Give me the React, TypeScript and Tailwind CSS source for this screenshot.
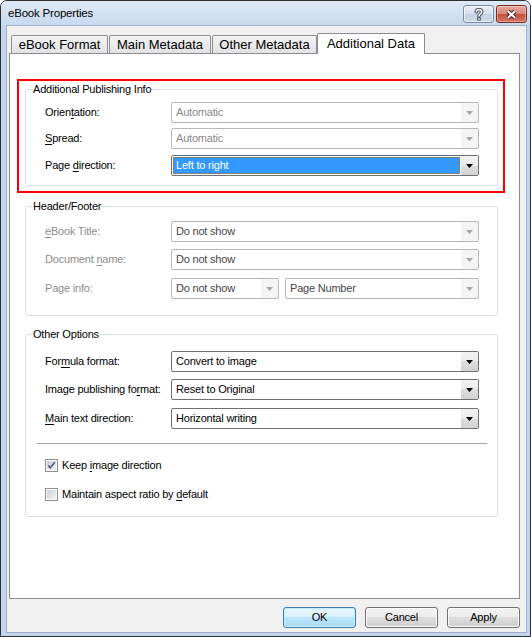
import type { ReactNode } from "react";

type ComboState = "disabled" | "enabled" | "focused";

function Key({ children }: { children: string }) {
    return <span className="underline decoration-1 underline-offset-[2px]">{children}</span>;
}

function DropArrow({ color }: { color: string }) {
    return (
        <svg width="7" height="4" viewBox="0 0 7 4">
            <path d="M0 0H7L3.5 4Z" fill={color} />
        </svg>
    );
}

function Combo({ value, state, width = "w-[308px]", tone = "text-black" }: { value: string; state: ComboState; width?: string; tone?: string }) {
    const disabled = state === "disabled";
    return (
        <div className={`flex h-[21px] shrink-0 rounded-[2px] border bg-white ${width} ${disabled ? "border-[#b4b8bb]" : "border-[#707070]"}`}>
            {state === "focused" ? (
                <div className="m-[1px] flex flex-1 items-center border border-dotted border-[#cc6600] bg-[#3399ff] pl-[2px] text-white">{value}</div>
            ) : (
                <div className={`flex flex-1 items-center pl-[4px] ${tone}`}>{value}</div>
            )}
            <div className={`flex w-[17px] items-center justify-center rounded-r-[1px] ${disabled ? "bg-[#f4f4f4]" : "bg-[linear-gradient(#f3f3f3,#ececec_50%,#dedede_50%,#d2d2d2)]"}`}>
                <DropArrow color={disabled ? "#a6a6a6" : "#000"} />
            </div>
        </div>
    );
}

function Row({ label, tone = "text-black", children }: { label: ReactNode; tone?: string; children: ReactNode }) {
    return (
        <div className="flex h-[21px] items-center">
            <div className={`w-[126px] shrink-0 whitespace-nowrap ${tone}`}>{label}</div>
            {children}
        </div>
    );
}

function Group({ title, className = "", children }: { title: string; className?: string; children: ReactNode }) {
    return (
        <fieldset className={`w-[473px] shrink-0 rounded-[3px] border border-[#d5dfe5] ${className}`}>
            <legend className="ml-[6px] px-[1px] leading-[15px] text-black">{title}</legend>
            {children}
        </fieldset>
    );
}

function Checkbox({ checked }: { checked: boolean }) {
    return (
        <svg width="13" height="13" viewBox="0 0 13 13" className="shrink-0">
            <defs>
                <linearGradient id={checked ? "cbOn" : "cbOff"} x1="0" y1="0" x2="1" y2="1">
                    <stop offset="0" stopColor="#c9ccd1" />
                    <stop offset="1" stopColor="#f5f5f5" />
                </linearGradient>
            </defs>
            <rect x="0.5" y="0.5" width="12" height="12" fill="#fdfdfd" stroke="#8e8f8f" />
            <rect x="2" y="2" width="9" height="9" fill={`url(#${checked ? "cbOn" : "cbOff"})`} />
            {checked && <path d="M3.2 6.4L5.3 8.8L9.8 3.2" fill="none" stroke="#4b5f8e" strokeWidth="1.7" />}
        </svg>
    );
}

function Tab({ label, width, active = false }: { label: string; width: string; active?: boolean }) {
    return active ? (
        <div className={`relative z-10 -mb-px flex h-[21px] justify-center rounded-t-[2px] border border-b-0 border-[#898c95] bg-white pt-[2px] ${width}`}>
            {label}
        </div>
    ) : (
        <div className={`flex h-[18px] items-center justify-center rounded-t-[2px] border border-b-0 border-[#8e8f8f] bg-linear-to-b from-[#f4f4f4] to-[#e2e2e2] ${width}`}>
            {label}
        </div>
    );
}

function Button({ label, primary = false }: { label: string; primary?: boolean }) {
    return (
        <button
            className={`flex h-[21px] w-[73px] items-center justify-center rounded-[3px] border text-black ${
                primary
                    ? "border-[#3c7fb1] bg-[linear-gradient(#eaf6fd,#d9f0fc_50%,#bee6fd_50%,#a7d9f5)] shadow-[inset_0_0_0_1px_#c4ecfc]"
                    : "border-[#707070] bg-[linear-gradient(#f2f2f2,#ebebeb_50%,#dddddd_50%,#cfcfcf)] shadow-[inset_0_0_0_1px_#fcfcfc]"
            }`}
        >
            {label}
        </button>
    );
}

export default function App() {
    return (
        <div className="h-[637px] w-[531px] overflow-hidden bg-white font-['Liberation_Sans',Arial,sans-serif] text-[11px] leading-[15px] tracking-[-0.2px] text-black">
            <div className="flex h-full w-full flex-col rounded-t-[7px] border border-[#2f2f2f] bg-[#c2d6ed]">
                {/* caption */}
                <div className="flex h-[24px] shrink-0 items-start rounded-t-[6px] bg-linear-to-b from-[#dfeaf7] to-[#c7d9ee]">
                    <span className="ml-[7px] mt-[5px] text-[11.5px]">eBook Properties</span>
                    <div className="ml-auto mr-[3px] mt-[4px] flex gap-[2px]">
                        <div className="flex h-[18px] w-[31px] items-center justify-center rounded-[3px] border border-[#7a8ba1] bg-[linear-gradient(#e8eef6,#d6e0ec_50%,#c4d2e3_50%,#ccd9e8)] shadow-[inset_0_0_0_1px_rgba(255,255,255,0.6)]">
                            <svg width="10" height="13" viewBox="0 0 10 13">
                                <path d="M2.3 4.1C2.3 2.4 3.5 1.6 5 1.6S7.7 2.4 7.7 3.9C7.7 5.9 5 5.8 5 8" fill="none" stroke="#3d4652" strokeWidth="3.4" strokeLinecap="round" />
                                <rect x="3.2" y="9.3" width="3.6" height="3.2" rx="0.6" fill="#3d4652" />
                                <path d="M2.3 4.1C2.3 2.4 3.5 1.6 5 1.6S7.7 2.4 7.7 3.9C7.7 5.9 5 5.8 5 8" fill="none" stroke="#fff" strokeWidth="1.5" strokeLinecap="round" />
                                <rect x="4.2" y="10.2" width="1.6" height="1.5" fill="#fff" />
                            </svg>
                        </div>
                        <div className="flex h-[18px] w-[31px] items-center justify-center rounded-[3px] border border-[#7a2c23] bg-[linear-gradient(#e9a99c,#d88676_50%,#c5503d_50%,#d37360)] shadow-[inset_0_0_0_1px_rgba(255,255,255,0.35)]">
                            <svg width="13" height="11" viewBox="0 0 13 11">
                                <path d="M3 2.2L10 8.8M10 2.2L3 8.8" stroke="#4d1b15" strokeWidth="4.2" />
                                <path d="M3 2.2L10 8.8M10 2.2L3 8.8" stroke="#fff" strokeWidth="2.2" />
                            </svg>
                        </div>
                    </div>
                </div>

                {/* client area */}
                <div className="mb-[3px] ml-[5px] mr-[3px] flex flex-1 flex-col border border-[#9fb0c6] bg-[#f0f0f0]">
                    <div className="flex h-[27px] shrink-0 items-end pl-[4px] text-[13px] tracking-normal">
                        <Tab label="eBook Format" width="w-[97px]" />
                        <div className="w-px" />
                        <Tab label="Main Metadata" width="w-[102px]" />
                        <div className="w-px" />
                        <Tab label="Other Metadata" width="w-[105px]" />
                        <Tab label="Additional Data" width="w-[108px]" active />
                    </div>

                    <div className="ml-[2px] flex h-[546px] w-[511px] shrink-0 flex-col border border-[#898c95] bg-white">
                        {/* highlighted section */}
                        <div className="ml-[7px] mt-[25px] h-[114px] w-[488px] shrink-0 border-2 border-[#ff0000] pl-[6px] pt-px">
                            <Group title="Additional Publishing Info">
                                <div className="flex flex-col pb-[9px] pl-[19px] pt-[5px]">
                                    <Row label={<>Orien<Key>t</Key>ation:</>}>
                                        <Combo value="Automatic" state="disabled" tone="text-[#8a8a8a]" />
                                    </Row>
                                    <div className="h-[5px]" />
                                    <Row label={<><Key>S</Key>pread:</>}>
                                        <Combo value="Automatic" state="disabled" tone="text-[#8a8a8a]" />
                                    </Row>
                                    <div className="h-[6px]" />
                                    <Row label={<>Page <Key>d</Key>irection:</>}>
                                        <Combo value="Left to right" state="focused" />
                                    </Row>
                                </div>
                            </Group>
                        </div>

                        <Group title="Header/Footer" className="ml-[15px] mt-[6px]">
                            <div className="flex flex-col pb-[16px] pl-[19px] pt-[7px]">
                                <Row label={<><Key>e</Key>Book Title:</>} tone="text-[#8d8d8d]">
                                    <Combo value="Do not show" state="disabled" tone="text-[#454545]" />
                                </Row>
                                <div className="h-[7px]" />
                                <Row label={<>Document <Key>n</Key>ame:</>} tone="text-[#8d8d8d]">
                                    <Combo value="Do not show" state="disabled" tone="text-[#454545]" />
                                </Row>
                                <div className="h-[8px]" />
                                <Row label="Page info:" tone="text-[#8d8d8d]">
                                    <Combo value="Do not show" state="disabled" width="w-[108px]" tone="text-[#454545]" />
                                    <div className="w-[6px]" />
                                    <Combo value="Page Number" state="disabled" width="w-[194px]" tone="text-[#454545]" />
                                </Row>
                            </div>
                        </Group>

                        <Group title="Other Options" className="ml-[15px] mt-[11px]">
                            <div className="flex flex-col pb-[15px] pl-[19px] pt-[9px]">
                                <Row label={<>For<Key>m</Key>ula format:</>}>
                                    <Combo value="Convert to image" state="enabled" />
                                </Row>
                                <div className="h-[7px]" />
                                <Row label={<>Image publishing fo<Key>r</Key>mat:</>}>
                                    <Combo value="Reset to Original" state="enabled" />
                                </Row>
                                <div className="h-[8px]" />
                                <Row label={<><Key>M</Key>ain text direction:</>}>
                                    <Combo value="Horizontal writing" state="enabled" />
                                </Row>
                                <div className="-ml-[8px] mt-[14px] h-px w-[450px] bg-[#a0a0a0]" />
                                <label className="mt-[15px] flex h-[13px] items-center gap-[4px]">
                                    <Checkbox checked />
                                    <span>Keep <Key>i</Key>mage direction</span>
                                </label>
                                <label className="mt-[16px] flex h-[13px] items-center gap-[4px]">
                                    <Checkbox checked={false} />
                                    <span>Maintain aspect ratio by <Key>d</Key>efault</span>
                                </label>
                            </div>
                        </Group>
                    </div>

                    <div className="ml-[2px] mt-[8px] flex w-[511px] justify-end gap-[9px]">
                        <Button label="OK" primary />
                        <Button label="Cancel" />
                        <Button label="Apply" />
                    </div>
                </div>
            </div>
        </div>
    );
}
